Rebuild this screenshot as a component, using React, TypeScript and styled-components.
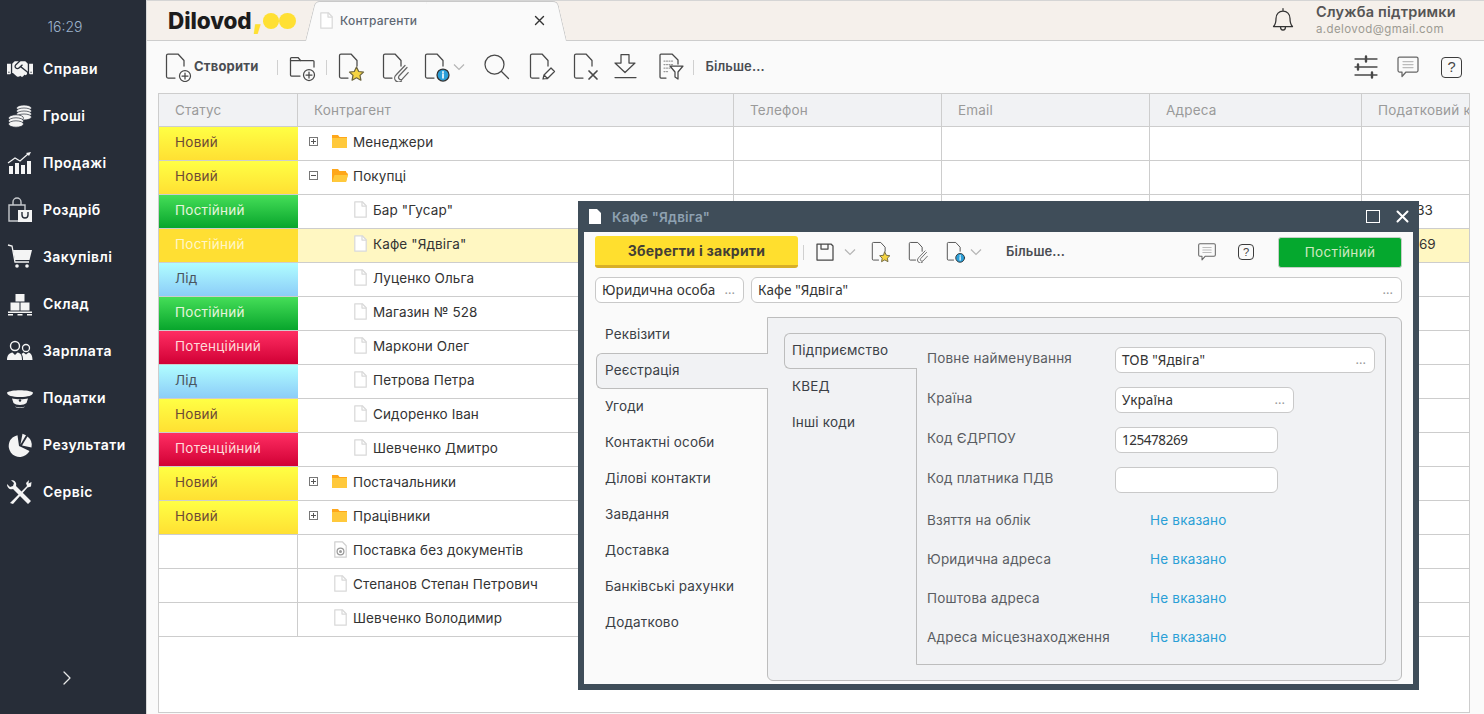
import React from "react";
import styled, { createGlobalStyle, css } from "styled-components";
import { FaHandshake } from "react-icons/fa";

const Global = createGlobalStyle`
  html, body, #root { height: 100%; margin: 0; }
  body { overflow: hidden; font-family: Inter, "Noto Sans", sans-serif; font-size: 13.5px; color: #3b3f46; }
  * { box-sizing: border-box; }
`;

const Page = styled.div`display: flex; height: 714px; width: 1484px; overflow: hidden; position: relative; background: #fafafa;`;

/* Sidebar */
const Sidebar = styled.aside`width: 146px; flex: none; background: #272d38; display: flex; flex-direction: column; color: #fff;`;
const Clock = styled.div`padding-top: 18px; height: 46px; line-height: 18px; text-align: center; font-size: 14px; font-weight: 300; color: #9db2cc; padding-right: 16px;`;
const SideItem = styled.div`height: 47px; display: flex; align-items: center; padding-left: 7px; padding-bottom: 2px; gap: 10px; font-size: 14px; font-weight: 600; letter-spacing: .45px;`;
const SideIcon = styled.svg`width: 26px; height: 26px; flex: none; fill: #f4f4f4;`;
const HandshakeIcon = styled(FaHandshake)`width: 26px; height: 26px; flex: none; color: #f4f4f4;`;
const Expand = styled.div`margin-top: auto; margin-bottom: 24px; height: 20px; display: flex; justify-content: center; padding-right: 12px;`;

/* Main */
const Main = styled.main`flex: 1; min-width: 0; display: flex; flex-direction: column; border-left: 1px solid #d8d8d8;`;
const TopBar = styled.header`height: 41px; flex: none; background: #f5f0eb; border-bottom: 1px solid #cdcdcd; border-top: 1px solid #d5d5d5; display: flex; padding-left: 21px; position: relative;`;
const Logo = styled.div`width: 137px; flex: none; display: flex; align-items: center; font-size: 22.5px; font-weight: 800; color: #1c1c1c; letter-spacing: -.1px; padding-bottom: 1px;`;
const LogoComma = styled.span`color: #ffe033; font-weight: 900; margin-left: 1px; margin-right: -1px; font-size: 30px; line-height: 1; margin-top: -6px;`;
const LogoDot = styled.span`width: 16.5px; height: 16px; border-radius: 50%; background: #ffe033; flex: none; margin-top: 1px;`;
const Tab = styled.div`
  width: 262px; height: 40px; flex: none; position: relative; display: flex; align-items: center; padding: 0 22px 2px 15px; gap: 7px; font-size: 12px; font-weight: 500; color: #5f6873; letter-spacing: .2px;
  &::before, &::after { content: ""; position: absolute; top: 0; bottom: 0; background: #fafafa; z-index: 0; border-top: 1px solid #c9c9c9; }
  &::before { left: 0; width: 50%; transform: skewX(-14deg); transform-origin: bottom left; border-left: 1px solid #c9c9c9; border-top-left-radius: 5px; }
  &::after { right: 0; width: 50%; transform: skewX(13deg); transform-origin: bottom right; border-right: 1px solid #c9c9c9; border-top-right-radius: 5px; }
  & > * { position: relative; z-index: 1; }
`;
const TabLabel = styled.span`flex: 1;`;
const TopRight = styled.div`margin-left: auto; display: flex; align-items: center; padding-right: 40px; gap: 21px;`;
const Support = styled.div`display: flex; flex-direction: column; width: 128px; padding-bottom: 3px; gap: 2px;`;
const SupportName = styled.span`font-size: 14.5px; font-weight: 600; color: #555; line-height: 17px; white-space: nowrap; letter-spacing: .2px;`;
const SupportMail = styled.span`font-size: 11.5px; color: #9c9a92; line-height: 14px; letter-spacing: .4px;`;
const BellWrap = styled.span`display: flex; margin-bottom: 4px;`;

const Toolbar = styled.div`height: 52px; flex: none; display: flex; align-items: center; padding-left: 15px; padding-right: 22px;`;
const CreateLabel = styled.span`font-size: 13px; font-weight: 700; color: #4a4d52; margin-left: 2px; letter-spacing: .2px; padding-bottom: 2px;`;
const Sep = styled.span<{ $m?: number; $r?: number }>`width: 1px; height: 15px; background: #d0d0d0; flex: none; margin: 0 ${p => p.$r ?? 12}px 0 ${p => p.$m ?? 12}px;`;
const ToolIcon = styled.span<{ $w?: number; $ml?: number }>`width: ${p => p.$w ?? 30}px; margin-left: ${p => p.$ml ?? 0}px; flex: none; display: flex; justify-content: center; align-items: center;`;
const Chevron = styled.svg<{ $ml?: number }>`width: 12px; height: 8px; fill: none; stroke: #b5b5b5; stroke-width: 1.2; flex: none; margin-left: ${p => p.$ml ?? 0}px;`;
const More = styled.span<{ $ml?: number }>`font-size: 13px; font-weight: 600; color: #4a4d52; letter-spacing: .1px; padding-bottom: 2px; margin-left: ${p => p.$ml ?? 0}px;`;
const Spacer = styled.span`flex: 1;`;
const HelpBox = styled.span<{ $s: number; $ml?: number }>`width: ${p => p.$s}px; height: ${p => p.$s}px; border: 1.4px solid #3c3c3c; border-radius: 4px; display: flex; align-items: center; justify-content: center; font-family: "Liberation Sans", sans-serif; font-size: ${p => p.$s * 0.7}px; color: #444; flex: none; margin-left: ${p => p.$ml ?? 0}px;`;

/* Table */
const TableWrap = styled.div`flex: 1; margin: 0 14px 1px 11px; border: 1px solid #cdcdcd; background: #fff; overflow: hidden; min-height: 0;`;
const gridCols = "139px 436px 208px 208px 212px 108px";
const HeadRow = styled.div`display: grid; grid-template-columns: ${gridCols}; height: 33px; background: #f1f2f4; border-bottom: 1px solid #cdcdcd;`;
const HeadCell = styled.div`border-right: 1px solid #cdcdcd; padding-left: 16px; display: flex; align-items: center; color: #9a9a9a; font-size: 13.5px; letter-spacing: .2px; white-space: nowrap; overflow: hidden; &:last-child { border-right: 0; }`;
const Row = styled.div<{ $sel?: boolean }>`display: grid; grid-template-columns: ${gridCols}; height: 34px; border-bottom: 1px solid #cdcdcd; ${p => p.$sel && css`background: #fff7c2;`}`;
const Cell = styled.div`border-right: 1px solid #cdcdcd; display: flex; align-items: center; font-size: 13.5px; color: #333; white-space: nowrap; overflow: hidden; padding-left: 16px; padding-bottom: 4px; &:last-child { border-right: 0; }`;
const statusStyles: Record<string, ReturnType<typeof css>> = {
  new: css`background: linear-gradient(#ffff44, #ffe033); color: #6e4a35;`,
  reg: css`background: linear-gradient(#45de58, #08a52c); color: #e6f5dc;`,
  lead: css`background: linear-gradient(#b0fdff, #8ccdf8); color: #4a5560;`,
  pot: css`background: linear-gradient(#ff2e63, #d10035); color: #ffd9d9;`,
  sel: css`background: #ffdf33; color: #fff6c9;`,
};
const StatusCell = styled.div<{ $k?: string }>`
  display: flex; align-items: center; font-size: 13.5px; letter-spacing: .25px; padding: 0 0 4px 17px;
  ${p => p.$k ? css`margin-left: -1px; ${statusStyles[p.$k]}` : css`border-right: 1px solid #cdcdcd;`}
`;
const NameCell = styled.div<{ $lvl: number }>`
  border-right: 1px solid #cdcdcd; display: flex; align-items: center; font-size: 13.5px; letter-spacing: .12px; color: #333; white-space: nowrap; overflow: hidden; padding-bottom: 4px;
  padding-left: ${p => (p.$lvl === 0 ? 11 : p.$lvl === 1 ? 36 : 56)}px;
`;
const Expander = styled.span`width: 9px; height: 9px; border: 1px solid #777; position: relative; flex: none; margin-right: 14px;
  &::before { content: ""; position: absolute; left: 1px; right: 1px; top: 3px; height: 1px; background: #555; }`;
const ExpanderPlus = styled(Expander)`&::after { content: ""; position: absolute; top: 1px; bottom: 1px; left: 3px; width: 1px; background: #555; }`;
const RowIcon = styled.span<{ $w: number }>`width: ${p => p.$w}px; flex: none; display: flex; align-items: center;`;

/* Modal */
const Modal = styled.section`position: absolute; left: 578px; top: 201px; width: 841px; height: 489px; background: #3f4d59; padding: 0 6px 6px; display: flex; flex-direction: column; z-index: 5;`;
const ModalTitle = styled.div`height: 31px; flex: none; display: flex; align-items: center; padding: 0 4px 0 5px; gap: 11px; color: #8ea1b1; font-size: 13.5px; font-weight: 600; letter-spacing: .2px;`;
const MaxBtn = styled.span`width: 14px; height: 13px; border: 1.5px solid #fff; margin-left: auto; flex: none; margin-right: 5px;`;
const ModalBody = styled.div`flex: 1; background: #fafafa; display: flex; flex-direction: column; min-height: 0;`;
const ModalBar = styled.div`height: 36px; flex: none; display: flex; align-items: center; padding: 4px 11px 0 11px;`;
const SaveBtn = styled.div`width: 203px; height: 32px; background: #ffdf2e; border-bottom: 3px solid #d8af27; border-radius: 3px; display: flex; align-items: center; justify-content: center; padding-bottom: 1px; font-weight: 700; font-size: 14px; color: #443f35; flex: none; letter-spacing: .25px;`;
const GreenBtn = styled.div`width: 124px; height: 31px; background: #05a82e; border: 1px solid #c5cfc5; border-radius: 3px; display: flex; align-items: center; justify-content: center; padding-bottom: 1px; color: #cfe8c0; font-size: 13.5px; flex: none; letter-spacing: .35px; margin-left: 4px;`;
const NameRow = styled.div`display: flex; gap: 7px; padding: 9px 11px 0 11px; flex: none;`;
const Field = styled.div<{ $w?: number }>`
  height: 26px; border: 1px solid #c9c9c9; border-radius: 6px; background: #fff; display: flex; align-items: center; padding: 0 6px 1px; font-family: "Noto Sans", sans-serif; font-size: 13.5px; letter-spacing: .1px; color: #333; white-space: nowrap;
  ${p => p.$w ? css`width: ${p.$w}px; flex: none;` : css`flex: 1;`}
`;
const CodeField = styled(Field)`letter-spacing: -.45px;`;
const Dots = styled.span`margin-left: auto; color: #999; font-size: 13px; line-height: 1; letter-spacing: 0; padding-right: 2px;`;
const TabsArea = styled.div`flex: 1; display: flex; min-height: 0; padding: 14px 11px 3px 12px;`;
const OuterNav = styled.nav`width: 172px; flex: none; display: flex; flex-direction: column; margin-right: -1px; position: relative; z-index: 1;`;
const OuterTab = styled.div<{ $on?: boolean }>`
  height: 36px; display: flex; align-items: center; padding: 0 0 2px 9px; font-size: 13.5px; letter-spacing: .15px; color: #3b3f46;
  ${p => p.$on && css`background: #f1f2f4; border: 1px solid #bdbdbd; border-right: 0; border-radius: 6px 0 0 6px; padding-left: 8px;`}
`;
const OuterPanel = styled.div`flex: 1; background: #f1f2f4; border: 1px solid #bdbdbd; border-radius: 0 6px 6px 6px; padding: 15px 15px 15px 16px; display: flex; min-width: 0;`;
const InnerNav = styled.nav`width: 133px; flex: none; display: flex; flex-direction: column; margin-right: -1px; position: relative; z-index: 1;`;
const InnerTab = styled.div<{ $on?: boolean }>`
  height: 36px; display: flex; align-items: center; padding: 0 0 2px 8px; font-size: 13.5px; letter-spacing: .2px; color: #3b3f46;
  ${p => p.$on && css`background: #f1f2f4; border: 1px solid #bdbdbd; border-right: 0; border-radius: 6px 0 0 6px; padding-left: 7px;`}
`;
const InnerPanel = styled.div`flex: 1; border: 1px solid #bdbdbd; border-radius: 0 6px 6px 0; padding: 6px 10px 0 10px; display: flex; flex-direction: column; min-width: 0;`;
const FormRow = styled.div<{ $h: number }>`height: ${p => p.$h}px; flex: none; display: flex; align-items: center; font-size: 13.5px; color: #5a5d62; letter-spacing: .2px;`;
const FormLabel = styled.span<{ $up?: boolean }>`width: 188px; flex: none; white-space: nowrap; padding-bottom: ${p => (p.$up ? 5 : 0)}px;`;
const LinkValue = styled.span`color: #2a9fd6; margin-left: 35px; letter-spacing: .2px;`;

/* Icons */
const Ic = styled.svg.attrs<{ stroke?: string; strokeWidth?: string | number }>(p => ({
  stroke: p.stroke ?? "#484848",
  strokeWidth: p.strokeWidth ?? 1.25,
}))`fill: none; stroke-linecap: round; stroke-linejoin: round; flex: none; display: block;`;

const sheet = "M13 26H6a1.5 1.5 0 0 1-1.5-1.5V3.5A1.5 1.5 0 0 1 6 2h10l6 6.5V14";
const DocBadge: React.FC<{ s?: number; children?: React.ReactNode }> = ({ s = 30, children }) => (
  <Ic width={s} height={s} viewBox="0 0 30 30"><path d={sheet} />{children}</Ic>
);
const PlusBadge = <g><circle cx="23" cy="24" r="5.5" fill="#fff" /><path d="M20 24h6M23 21v6" /></g>;
const StarBadge = <path d="M21.5 15l2.2 4.5 4.8.6-3.500 3.300.9 4.800-4.400-2.400-4.400 2.400.9-4.800-3.500-3.300 4.800-.6z" fill="#f5d442" stroke="#6b6440" />;
const ClipBadge = <path d="M28 15.5l-8 8.5a2.3 2.3 0 0 0 3.2 3.2l6-6.5M26 13.5l-9 9.5a4 4 0 0 0 5.5 6" stroke="#666" />;
const InfoBadge = <g><circle cx="22" cy="23" r="6" fill="#2b9fd8" stroke="#333" /><path d="M22 22v4M22 19.8v.6" stroke="#fff" strokeWidth="1.6" /></g>;
const PenBadge = <path d="M17 27l1-4 7-7 3.5 3.5-7 7z M18 23l3.5 3.5" fill="#fff" />;
const XBadge = <path d="M19 19l8 8M27 19l-8 8" strokeWidth="1.7" />;
const FolderPlus = () => (
  <Ic width="30" height="30" viewBox="0 0 30 30"><path d="M13 24H4.5a1 1 0 0 1-1-1V6.5a1 1 0 0 1 1-1h6.500l2.500 3h12.500a1 1 0 0 1 1 1V15" /><path d="M3.500 8.500h10" /><circle cx="22" cy="23" r="5.500" /><path d="M19 23h6M22 20v6" /></Ic>
);
const Search = () => (<Ic width="30" height="30" viewBox="0 0 30 30"><circle cx="13.5" cy="12.5" r="9.5" /><path d="M20.5 19.5l7 7" /></Ic>);
const Download = () => (<Ic width="30" height="30" viewBox="0 0 30 30"><path d="M11 2.500h8v8.500h6L15 20.500 5 11h6zM5 25.500h21" /></Ic>);
const Filter = () => (
  <Ic width="30" height="30" viewBox="0 0 30 30"><path d="M11 26H6a1 1 0 0 1-1-1V3a1 1 0 0 1 1-1h11l6 6v4" />
    <path d="M9 9h9M9 12.500h9M9 16h6M9 19.500h4" strokeDasharray="1 1.500" stroke="#999" /><path d="M15 14h13l-5 6v7l-3-2v-5z" fill="#fff" /></Ic>
);
const Sliders = () => (
  <Ic width="26" height="26" viewBox="0 0 26 26" strokeWidth="1.3"><path d="M2 5h22M2 13h22M2 21h22" /><path d="M13 2.500v5M5 10.500v5M19 18.500v5" strokeWidth="2.400" /></Ic>
);
const Comment: React.FC<{ s?: number }> = ({ s = 24 }) => (
  <Ic width={s} height={s} viewBox="0 0 24 24" stroke="#666"><path d="M3.500 2h17A1.500 1.500 0 0 1 22 3.500v12a1.500 1.500 0 0 1-1.500 1.500H10l-4 4.500V17H3.500A1.500 1.500 0 0 1 2 15.500v-12A1.500 1.500 0 0 1 3.500 2z" /><path d="M7 6.500h10M7 9.500h10M7 12.500h10" stroke="#bbb" /></Ic>
);
const Bell = () => (
  <Ic width="24" height="26" viewBox="0 0 24 26" stroke="#333"><path d="M2.500 20.500c2-2 2.500-3.500 2.500-8 0-4.500 3-7.500 7-7.500s7 3 7 7.500c0 4.500.5 6 2.500 8zM12 5V2.500M9.500 21c0 1.800 1 3 2.500 3s2.500-1.200 2.500-3" /></Ic>
);
const SmallX: React.FC = () => (<Ic width="11" height="11" viewBox="0 0 11 11" stroke="#333" strokeWidth="1.400"><path d="M1.500 1.500l8 8M9.500 1.500l-8 8" /></Ic>);
const LightDoc = () => (
  <Ic width="13" height="17" viewBox="0 0 13 17" stroke="#d9d9d9"><path d="M.8.800h7.500l3.900 4v11.400H.8z" fill="#fff" /><path d="M8 1v4h4" /></Ic>
);
const TargetDoc = () => (
  <Ic width="13" height="17" viewBox="0 0 13 17" stroke="#d0d0d0"><path d="M.8.800h7.500l3.900 4v11.400H.8z" fill="#fff" /><circle cx="6.500" cy="10.500" r="3.400" stroke="#999" /><circle cx="6.500" cy="10.500" r="1.500" fill="#999" stroke="none" /></Ic>
);
const FolderClosed = () => (
  <svg width="15" height="13" viewBox="0 0 15 13"><path d="M0 0h6l1.500 2H15v2H0z" fill="#ffa71a" /><rect y="3" width="15" height="10" fill="#ffc93c" /></svg>
);
const FolderOpen = () => (
  <svg width="16" height="13" viewBox="0 0 16 13"><path d="M0 0h6l1.500 2H14v2H0z" fill="#ffa71a" /><path d="M0 13V3h14l2 2-2 8z" fill="#ffa71a" /><path d="M0 13l2.500-7H16l-2 7z" fill="#ffc93c" /></svg>
);
const WhiteDoc = () => (<svg width="12" height="15" viewBox="0 0 12 15"><path d="M0 0h8l4 4v11H0z" fill="#fff" /></svg>);
const Floppy = () => (
  <Ic width="20" height="20" viewBox="0 0 20 20"><path d="M2 2h14l2 2v14H2zM6 2v5h7V2" /></Ic>
);
const ChevronDown: React.FC<{ ml?: number }> = ({ ml }) => (<Chevron $ml={ml} viewBox="0 0 12 8"><path d="M1 1.500l5 5 5-5" /></Chevron>);

const Coins = () => (
  <SideIcon viewBox="0 0 26 26"><g stroke="#272d38" strokeWidth=".7">
    {[5, 8, 11, 14].map(y => <ellipse key={y} cx="17" cy={y} rx="7.500" ry="3" />)}
    {[15, 18, 21].map(y => <ellipse key={y} cx="9" cy={y} rx="7.500" ry="3.200" />)}
  </g></SideIcon>
);
const Chart = () => (
  <SideIcon viewBox="0 0 26 26"><rect x="2" y="16" width="4" height="8" /><rect x="8" y="13" width="4" height="11" /><rect x="14" y="15" width="4" height="9" /><rect x="20" y="11" width="4" height="13" /><path d="M1 13l7-5 5 3 8-7" fill="none" stroke="#f4f4f4" strokeWidth="1.200" /><path d="M24 2l-5 1 3 3z" /></SideIcon>
);
const Bag = () => (
  <SideIcon viewBox="0 0 26 26"><path d="M2 8h16v16H2z" fill="none" stroke="#c5c8cc" strokeWidth="1.400" /><path d="M6 8V5a4 4 0 0 1 8 0v3" fill="none" stroke="#c5c8cc" strokeWidth="1.400" /><path d="M11 13h14v12H11z" /><path d="M15 15v3a3 3 0 0 0 6 0v-3" fill="none" stroke="#272d38" strokeWidth="1.400" /></SideIcon>
);
const Cart = () => (
  <SideIcon viewBox="0 0 26 26"><path d="M1 1l4 1 3 16h14" fill="none" stroke="#f4f4f4" strokeWidth="1.300" /><path d="M6 6h19l-2.500 10H8z" /><circle cx="10" cy="22" r="1.800" /><circle cx="20" cy="22" r="1.800" /></SideIcon>
);
const Pallet = () => (
  <SideIcon viewBox="0 0 26 26"><rect x="8.500" y="3" width="9" height="7.500" /><rect x="3.500" y="11.500" width="9" height="8" /><rect x="13.500" y="11.500" width="9" height="8" /><rect x="1" y="20.500" width="24" height="1.500" /><rect x="1" y="23" width="5" height="1.500" /><rect x="10.500" y="23" width="5" height="1.500" /><rect x="20" y="23" width="5" height="1.500" /></SideIcon>
);
const People = () => (
  <SideIcon viewBox="0 0 26 26"><circle cx="8" cy="8" r="4.500" fill="none" stroke="#f4f4f4" strokeWidth="1.400" /><path d="M0 22c0-5 2.500-7 5.500-7.500L8 17l2.500-2.500C13.500 15 15 17 15 22z" /><circle cx="19" cy="10" r="3.500" fill="none" stroke="#f4f4f4" strokeWidth="1.300" /><path d="M16 22c0-3-.5-5-1.500-6l2-1.500 2.500 2 2.500-2c2.500.7 4 3 4 7.500z" /></SideIcon>
);
const Cap = () => (
  <SideIcon viewBox="0 0 26 26"><path d="M0 7.500C4 4.500 22 4.500 26 7.500c0 3-5 4.500-13 4.500S0 10.500 0 7.500z" /><path d="M5 13.500c4 1 12 1 16 0l-1.500 4.500c-2.500 2.500-10.500 2.500-13 0z" /><path d="M8 21.500c3 1.200 7 1.200 10 0-2 2-8 2-10 0z" /><circle cx="13" cy="15.500" r="1.200" fill="#272d38" /></SideIcon>
);
const Pie = () => (
  <SideIcon viewBox="0 0 26 26"><path d="M12 14L10.500 3.200A11 11 0 1 0 22.500 19z" /><path d="M13.500 12.500L15.500 1.800L19 3.200z" /><path d="M15 13.500L20.500 4.500A11 11 0 0 1 24.500 15.500z" /></SideIcon>
);
const Tools = () => (
  <SideIcon viewBox="0 0 26 26"><path d="M3 24L20 7l-1-3 3-3-.5 3.500L24.500 3l-.5 4.500-3.500 1L6 25z" /><path d="M24 22L9 7c1-3-1-6-5-6l3 3-1 3-3 1-3-3c0 4 3 6 6 5l15 15z" /></SideIcon>
);

const nav: [React.ReactNode, string][] = [
  [<HandshakeIcon />, "Справи"], [<Coins />, "Гроші"], [<Chart />, "Продажі"], [<Bag />, "Роздріб"], [<Cart />, "Закупівлі"],
  [<Pallet />, "Склад"], [<People />, "Зарплата"], [<Cap />, "Податки"], [<Pie />, "Результати"], [<Tools />, "Сервіс"],
];

type R = { st?: string; label?: string; name: string; lvl: number; kind: "plus" | "minus" | "doc" | "target"; tail?: string; sel?: boolean };
const rows: R[] = [
  { st: "new", label: "Новий", name: "Менеджери", lvl: 0, kind: "plus" },
  { st: "new", label: "Новий", name: "Покупці", lvl: 0, kind: "minus" },
  { st: "reg", label: "Постійний", name: 'Бар "Гусар"', lvl: 2, kind: "doc", tail: "1547833" },
  { st: "sel", label: "Постійний", name: 'Кафе "Ядвіга"', lvl: 2, kind: "doc", tail: "5478269", sel: true },
  { st: "lead", label: "Лід", name: "Луценко Ольга", lvl: 2, kind: "doc" },
  { st: "reg", label: "Постійний", name: "Магазин № 528", lvl: 2, kind: "doc" },
  { st: "pot", label: "Потенційний", name: "Маркони Олег", lvl: 2, kind: "doc" },
  { st: "lead", label: "Лід", name: "Петрова Петра", lvl: 2, kind: "doc" },
  { st: "new", label: "Новий", name: "Сидоренко Іван", lvl: 2, kind: "doc" },
  { st: "pot", label: "Потенційний", name: "Шевченко Дмитро", lvl: 2, kind: "doc" },
  { st: "new", label: "Новий", name: "Постачальники", lvl: 0, kind: "plus" },
  { st: "new", label: "Новий", name: "Працівники", lvl: 0, kind: "plus" },
  { name: "Поставка без документів", lvl: 1, kind: "target" },
  { name: "Степанов Степан Петрович", lvl: 1, kind: "doc" },
  { name: "Шевченко Володимир", lvl: 1, kind: "doc" },
];

const outerTabs = ["Реквізити", "Реєстрація", "Угоди", "Контактні особи", "Ділові контакти", "Завдання", "Доставка", "Банківські рахунки", "Додатково"];

export default function App() {
  return (
    <Page>
      <Global />
      <Sidebar>
        <Clock>16:29</Clock>
        {nav.map(([icon, label]) => <SideItem key={label}>{icon}{label}</SideItem>)}
        <Expand><Ic width="10" height="16" viewBox="0 0 10 16" stroke="#e8e8e8"><path d="M2 2l6 6-6 6" /></Ic></Expand>
      </Sidebar>
      <Main>
        <TopBar>
          <Logo>Dilovod<LogoComma>,</LogoComma><LogoDot /><LogoDot /></Logo>
          <Tab><LightDoc /><TabLabel>Контрагенти</TabLabel><SmallX /></Tab>
          <TopRight>
            <BellWrap><Bell /></BellWrap>
            <Support><SupportName>Служба підтримки</SupportName><SupportMail>a.delovod@gmail.com</SupportMail></Support>
          </TopRight>
        </TopBar>
        <Toolbar>
          <DocBadge>{PlusBadge}</DocBadge>
          <CreateLabel>Створити</CreateLabel>
          <Sep $m={18} $r={9} />
          <ToolIcon><FolderPlus /></ToolIcon>
          <Sep $m={9} $r={8} />
          <ToolIcon><DocBadge>{StarBadge}</DocBadge></ToolIcon>
          <ToolIcon $ml={14}><DocBadge>{ClipBadge}</DocBadge></ToolIcon>
          <ToolIcon $ml={12}><DocBadge>{InfoBadge}</DocBadge></ToolIcon>
          <ChevronDown ml={2} />
          <ToolIcon $ml={16}><Search /></ToolIcon>
          <ToolIcon $ml={15}><DocBadge>{PenBadge}</DocBadge></ToolIcon>
          <ToolIcon $ml={14}><DocBadge>{XBadge}</DocBadge></ToolIcon>
          <ToolIcon $ml={10}><Download /></ToolIcon>
          <ToolIcon $ml={15}><Filter /></ToolIcon>
          <Sep $m={8} $r={12} />
          <More>Більше...</More>
          <Spacer />
          <ToolIcon $w={26}><Sliders /></ToolIcon>
          <ToolIcon $w={24} $ml={17}><Comment /></ToolIcon>
          <HelpBox $s={21} $ml={21}>?</HelpBox>
        </Toolbar>
        <TableWrap>
          <HeadRow>
            <HeadCell>Статус</HeadCell><HeadCell>Контрагент</HeadCell><HeadCell>Телефон</HeadCell><HeadCell>Email</HeadCell><HeadCell>Адреса</HeadCell><HeadCell>Податковий код</HeadCell>
          </HeadRow>
          {rows.map((r, i) => (
            <Row key={i} $sel={r.sel}>
              <StatusCell $k={r.st}>{r.label}</StatusCell>
              <NameCell $lvl={r.lvl}>
                {r.kind === "plus" && <><ExpanderPlus /><RowIcon $w={21}><FolderClosed /></RowIcon></>}
                {r.kind === "minus" && <><Expander /><RowIcon $w={21}><FolderOpen /></RowIcon></>}
                {r.kind === "doc" && <RowIcon $w={19}><LightDoc /></RowIcon>}
                {r.kind === "target" && <RowIcon $w={19}><TargetDoc /></RowIcon>}
                {r.name}
              </NameCell>
              <Cell /><Cell /><Cell />
              <Cell>{r.tail}</Cell>
            </Row>
          ))}
        </TableWrap>
      </Main>
      <Modal>
        <ModalTitle><WhiteDoc />Кафе "Ядвіга"<MaxBtn /><Ic width="13" height="13" viewBox="0 0 13 13" stroke="#fff" strokeWidth="2"><path d="M1.500 1.500l10 10M11.500 1.500l-10 10" /></Ic></ModalTitle>
        <ModalBody>
          <ModalBar>
            <SaveBtn>Зберегти і закрити</SaveBtn>
            <Sep $m={5} $r={10} />
            <ToolIcon $w={22}><Floppy /></ToolIcon>
            <ToolIcon $w={28}><ChevronDown /></ToolIcon>
            <ToolIcon $w={32}><DocBadge s={22}>{StarBadge}</DocBadge></ToolIcon>
            <ToolIcon $w={40} $ml={1}><DocBadge s={22}>{ClipBadge}</DocBadge></ToolIcon>
            <ToolIcon $w={36}><DocBadge s={22}>{InfoBadge}</DocBadge></ToolIcon>
            <ChevronDown ml={-3} />
            <More $ml={24}>Більше...</More>
            <Spacer />
            <ToolIcon $w={22}><Comment s={20} /></ToolIcon>
            <ToolIcon $w={56}><HelpBox $s={16}>?</HelpBox></ToolIcon>
            <GreenBtn>Постійний</GreenBtn>
          </ModalBar>
          <NameRow>
            <Field $w={149}>Юридична особа<Dots>...</Dots></Field>
            <Field>Кафе "Ядвіга"<Dots>...</Dots></Field>
          </NameRow>
          <TabsArea>
            <OuterNav>
              {outerTabs.map(t => <OuterTab key={t} $on={t === "Реєстрація"}>{t}</OuterTab>)}
            </OuterNav>
            <OuterPanel>
              <InnerNav>
                <InnerTab $on>Підприємство</InnerTab>
                <InnerTab>КВЕД</InnerTab>
                <InnerTab>Інші коди</InnerTab>
              </InnerNav>
              <InnerPanel>
                <FormRow $h={40}><FormLabel $up>Повне найменування</FormLabel><Field $w={260}>ТОВ "Ядвіга"<Dots>...</Dots></Field></FormRow>
                <FormRow $h={40}><FormLabel $up>Країна</FormLabel><Field $w={179}>Україна<Dots>...</Dots></Field></FormRow>
                <FormRow $h={40}><FormLabel $up>Код ЄДРПОУ</FormLabel><CodeField $w={163}>125478269</CodeField></FormRow>
                <FormRow $h={40}><FormLabel $up>Код платника ПДВ</FormLabel><Field $w={163} /></FormRow>
                <FormRow $h={39.5}><FormLabel>Взяття на облік</FormLabel><LinkValue>Не вказано</LinkValue></FormRow>
                <FormRow $h={39}><FormLabel>Юридична адреса</FormLabel><LinkValue>Не вказано</LinkValue></FormRow>
                <FormRow $h={39}><FormLabel>Поштова адреса</FormLabel><LinkValue>Не вказано</LinkValue></FormRow>
                <FormRow $h={39}><FormLabel>Адреса місцезнаходження</FormLabel><LinkValue>Не вказано</LinkValue></FormRow>
              </InnerPanel>
            </OuterPanel>
          </TabsArea>
        </ModalBody>
      </Modal>
    </Page>
  );
}
